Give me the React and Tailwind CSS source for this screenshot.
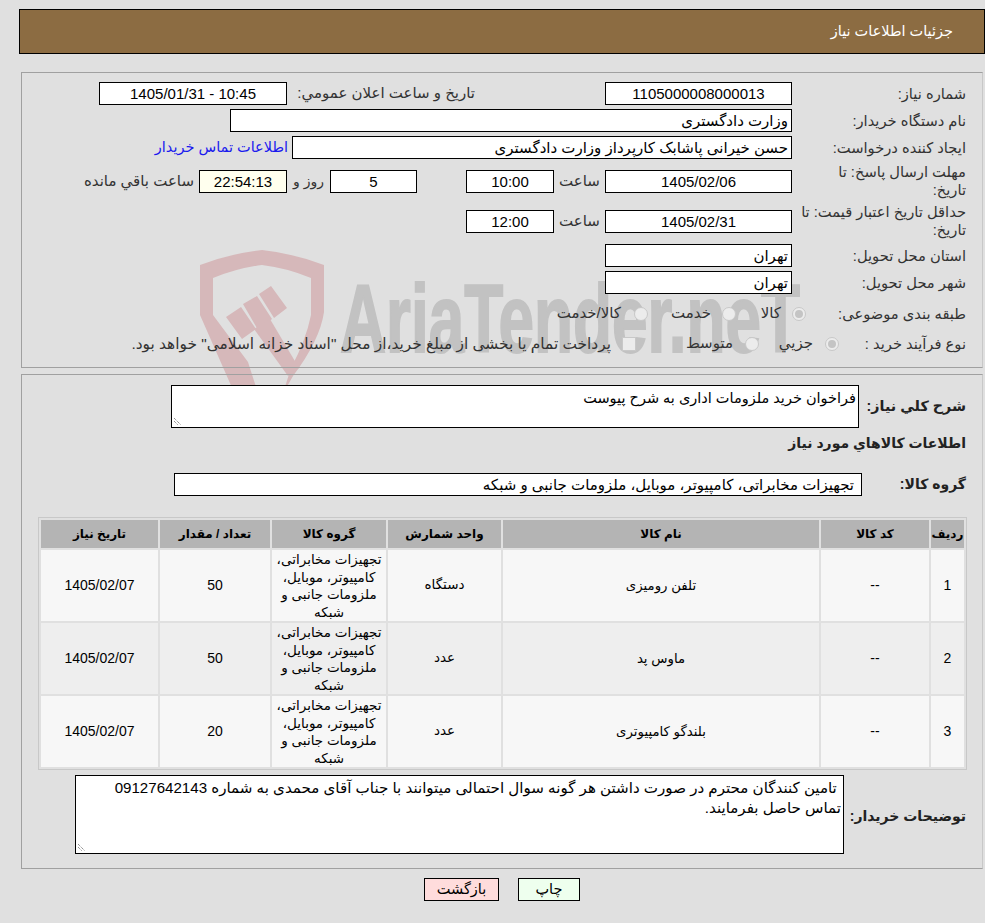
const F = "font-['Liberation_Sans','DejaVu_Sans',sans-serif]";

function Box({ w, children, center, cream, className = "" }) {
  return (
    <div
      className={`h-[23px] shrink-0 border border-black leading-[21px] text-[15px] px-[3px] overflow-hidden whitespace-nowrap ${center ? "text-center" : "text-right"} ${cream ? "bg-[#ffffee]" : "bg-white"} ${className}`}
      style={{ width: w }}
    >
      {children}
    </div>
  );
}

function Label({ children }) {
  return <div className="w-[167px] ml-[7px] shrink-0 text-[14.7px] leading-[18px] text-[#333]">{children}</div>;
}

function Row({ label, className = "", children }) {
  return (
    <div className={`flex items-center ${className}`}>
      <Label>{label}</Label>
      {children}
    </div>
  );
}

function Radio({ on }) {
  return (
    <span className="w-[14px] h-[14px] rounded-full border border-[#c8c8c8] bg-[#ececec] flex items-center justify-center shrink-0">
      {on && <span className="w-[8px] h-[8px] rounded-full bg-[#c4c4c4]" />}
    </span>
  );
}

const GROUP = "تجهیزات مخابراتی، کامپیوتر، موبایل، ملزومات جانبی و شبکه";
const rows = [
  ["1", "--", "تلفن رومیزی", "دستگاه", "50"],
  ["2", "--", "ماوس پد", "عدد", "50"],
  ["3", "--", "بلندگو کامپیوتری", "عدد", "20"],
];
const heads = [
  ["ردیف", 33], ["کد کالا", 108], ["نام کالا", 316], ["واحد شمارش", 113],
  ["گروه کالا", 114], ["تعداد / مقدار", 110], ["تاریخ نیاز", 117],
];

function Grip() {
  return (
    <svg className="absolute left-[1px] bottom-[1px]" width="10" height="10" viewBox="0 0 10 10">
      <path d="M1 2 L8 9 M1 5 L5 9" stroke="#666" strokeWidth="1" strokeDasharray="1 1" fill="none" />
    </svg>
  );
}

function Watermark() {
  return (
    <div className="absolute left-0 top-0 pointer-events-none select-none" dir="ltr">
      <svg className="absolute left-[190px] top-[240px]" width="150" height="160" viewBox="190 240 150 160">
        <path
          fillRule="evenodd"
          d="M200 265 Q232 253 262 250 Q292 253 324 265 L324 312 Q320 340 293 376 L285 390 L233 390 L200 315 Z M213 278 Q238 268 262 265 Q287 268 311 278 L311 315 Q306 340 291 368 L284 390 L257 390 L248 362 L213 315 Z"
          fill="#d6b8ba"
        />
        <path d="M226 317 L241 307 L256 329 L242 339 Z M243 304 L257 296 L272 319 L258 330 Z M259 294 L271 286 L287 308 L274 318 Z" fill="#d6b8ba" />
        <path d="M254 329 L270 319 L299 368 L288 376 Z" fill="#d6b8ba" />
      </svg>
      <div className="absolute left-[340px] top-[269px] text-[#c2c2c2] font-bold text-[96px] leading-[100px] whitespace-nowrap font-['Liberation_Sans',sans-serif] origin-left scale-x-[0.665] [-webkit-text-stroke:2px_#c2c2c2]">
        AriaTender.neT
      </div>
    </div>
  );
}

export default function App() {
  return (
    <div dir="rtl" className={`relative w-[985px] h-[923px] bg-[#e0e0e0] text-black overflow-hidden ${F}`}>
      <Watermark />
      <div className="h-[9px]" />
      <div className="h-[45px] ml-[19px] border border-black bg-[#8c6c42] text-white text-[14.5px] leading-[43px] pr-[31px]">جزئیات اطلاعات نیاز</div>

      <div className="relative mt-[18px] ml-[21px] mr-[2px] h-[296px] border border-t-[#a0a0a0] border-l-[#a0a0a0] border-b-[#a0a0a0] border-r-[#c8c8c8] pr-[16px] pt-[9px]">
        <div className="relative flex flex-col">
          <Row label="شماره نیاز:" className="h-[23px]">
            <Box w={187} center className="text-[14.6px]">1105000008000013</Box>
            <div className="w-[130px]" />
            <div className="w-[188px] text-[15px] text-[#333] whitespace-nowrap">تاريخ و ساعت اعلان عمومي:</div>
            <Box w={188} center className="text-[15.3px]">10:45 - 1405/01/31</Box>
          </Row>
          <Row label="نام دستگاه خریدار:" className="h-[23px] mt-[4px]">
            <Box w={562} className="text-[14.5px]">وزارت دادگستری</Box>
          </Row>
          <Row label="ایجاد کننده درخواست:" className="h-[23px] mt-[4px]">
            <Box w={500}>حسن خیرانی پاشابک کارپرداز وزارت دادگستری</Box>
            <a className="mr-[4px] text-[14.5px] text-[#1a1aee] whitespace-nowrap">اطلاعات تماس خریدار</a>
          </Row>
          <Row label={<>مهلت ارسال پاسخ: تا<br />تاریخ:</>} className="h-[36px] mt-[4px]">
            <Box w={187} center className="h-[22px] leading-[20px]">1405/02/06</Box>
            <div className="w-[51px] text-center text-[15px] text-[#333]">ساعت</div>
            <Box w={88} center className="h-[22px] leading-[20px]">10:00</Box>
            <div className="w-[49px]" />
            <Box w={87} center className="h-[22px] leading-[20px]">5</Box>
            <div className="w-[43px] text-center text-[14px] text-[#333]">روز و</div>
            <Box w={88} center cream className="h-[22px] leading-[20px]">22:54:13</Box>
            <div className="mr-[5px] text-[15px] text-[#333] whitespace-nowrap">ساعت باقي مانده</div>
          </Row>
          <Row label="حداقل تاریخ اعتبار قیمت: تا تاریخ:" className="h-[36px] mt-[4px]">
            <Box w={187} center>1405/02/31</Box>
            <div className="w-[51px] text-center text-[15px] text-[#333]">ساعت</div>
            <Box w={88} center>12:00</Box>
          </Row>
          <Row label="استان محل تحویل:" className="h-[23px] mt-[5px]">
            <Box w={187} className="text-[14.5px]">تهران</Box>
          </Row>
          <Row label="شهر محل تحویل:" className="h-[23px] mt-[4px]">
            <Box w={187} className="text-[14.5px]">تهران</Box>
          </Row>
          <Row label="طبقه بندی موضوعی:" className="h-[23px] mt-[8px]">
            <div className="flex items-center mr-[-14px] text-[15px] text-[#333] whitespace-nowrap">
              <Radio on />
              <span className="mr-[11px] w-[45px]">کالا</span>
              <Radio />
              <span className="mr-[11px] w-[63px]">خدمت</span>
              <Radio />
              <span className="mr-[13px]">کالا/خدمت</span>
            </div>
          </Row>
          <Row label="نوع فرآیند خرید :" className="h-[23px] mt-[7px]">
            <div className="flex items-center mr-[-47px] text-[15px] text-[#333] whitespace-nowrap">
              <Radio on />
              <span className="mr-[12px] w-[54px]">جزيي</span>
              <Radio />
              <span className="mr-[12px] w-[97px]">متوسط</span>
              <span className="w-[14px] h-[14px] border border-[#c8c8c8] bg-[#ececec] shrink-0" />
              <span className="mr-[11px] text-[15.4px]">پرداخت تمام یا بخشی از مبلغ خرید،از محل "اسناد خزانه اسلامی" خواهد بود.</span>
            </div>
          </Row>
        </div>
      </div>

      <div className="relative mt-[6px] ml-[21px] mr-[2px] h-[495px] border border-t-[#a0a0a0] border-l-[#a0a0a0] border-b-[#a0a0a0] border-r-[#c8c8c8] pr-[16px] pt-[10px]">
        <div className="flex">
          <div className="w-[103px] shrink-0 ml-[4px] pt-[11px] font-bold text-[14.3px] text-[#222] whitespace-nowrap">شرح کلي نیاز:</div>
          <div className="relative w-[688px] h-[43px] border border-black bg-white text-[14.5px] leading-[20px] px-[2px] pt-[2px]">
            فراخوان خرید ملزومات اداری به شرح پیوست
            <Grip />
          </div>
        </div>
        <div className="mt-[5px] h-[20px] font-bold text-[14px] text-[#222] leading-[20px]">اطلاعات کالاهاي مورد نياز</div>
        <div className="flex items-center mt-[20px]">
          <div className="w-[104px] shrink-0 font-bold text-[14px] text-[#222]">گروه کالا:</div>
          <Box w={688} className="pr-[7px]">تجهیزات مخابراتی، کامپیوتر، موبایل، ملزومات جانبی و شبکه</Box>
        </div>

        <table className="mt-[21px] mr-[-1px] w-[929px] table-fixed border-separate border-spacing-[2px] border border-[#c8c8c8] bg-[#e0e0e0] text-[14px]">
          <colgroup>
            {heads.map(([, w], i) => <col key={i} style={{ width: w }} />)}
          </colgroup>
          <thead>
            <tr className="h-[28px]">
              {heads.map(([t], i) => (
                <th key={i} className="bg-[#b4b4b4] text-[12px] font-bold text-center p-0 whitespace-nowrap">{t}</th>
              ))}
            </tr>
          </thead>
          <tbody>
            {rows.map((r, i) => (
              <tr key={i} className={i === 1 ? "h-[71px] bg-[#eeeeee]" : "h-[71px] bg-[#f7f7f7]"}>
                <td className="text-center p-0">{r[0]}</td>
                <td className="text-center p-0">{r[1]}</td>
                <td className="text-center p-0 text-[13.3px]">{r[2]}</td>
                <td className="text-center p-0 text-[13.5px]">{r[3]}</td>
                <td className="text-center pt-[1px] pb-0 px-[2px] leading-[17.5px] text-[13.5px]">{GROUP}</td>
                <td className="text-center p-0">{r[4]}</td>
                <td className="text-center p-0">1405/02/07</td>
              </tr>
            ))}
          </tbody>
        </table>

        <div className="flex items-center mt-[5px]">
          <div className="w-[122px] shrink-0 font-bold text-[14px] text-[#222] pt-[4px] whitespace-nowrap">توضیحات خریدار:</div>
          <div className="relative w-[769px] h-[79px] border border-black bg-white text-[15.1px] leading-[20px] px-[2px] pt-[2px]">
            &nbsp;تامین کنندگان محترم در صورت داشتن هر گونه سوال احتمالی میتوانند با جناب آقای محمدی به شماره 09127642143 تماس حاصل بفرمایند.
            <Grip />
          </div>
        </div>
      </div>

      <div className="flex justify-center gap-[19px] mt-[9px] pl-[19px]">
        <button className="w-[62px] h-[23px] border border-black bg-[#eeffee] text-[14.5px] leading-[21px]">چاپ</button>
        <button className="w-[75px] h-[23px] border border-black bg-[#ffdcdc] text-[14.5px] leading-[21px]">بازگشت</button>
      </div>
    </div>
  );
}
